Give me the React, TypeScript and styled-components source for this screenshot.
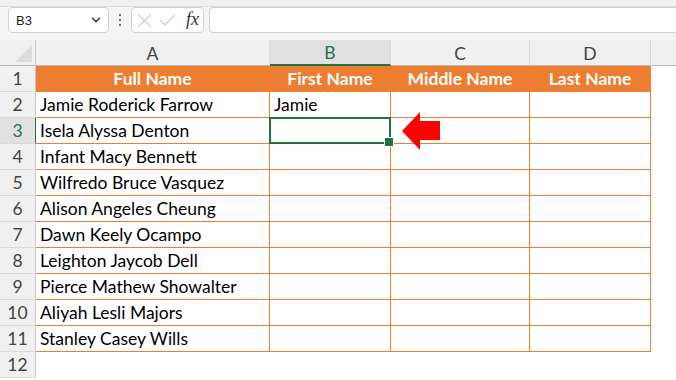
import React from 'react';
import styled, { createGlobalStyle } from 'styled-components';
import { ChevronDown, X, Check } from 'lucide-react';

const GlobalStyle = createGlobalStyle`
  html, body {
    margin: 0;
    padding: 0;
    background: #ffffff;
    width: 676px;
    height: 380px;
    overflow: hidden;
  }
  * { box-sizing: border-box; }
`;

const ORANGE = '#ED7D31';
const GREEN = '#217346';

const Sheet = styled.div`
  width: 676px;
  height: 380px;
  display: flex;
  flex-direction: column;
  font-family: Lato, 'Liberation Sans', sans-serif;
  background: #ffffff;
`;

const TopStrip = styled.div`
  height: 7px;
  background: #f0f0f0;
  border-bottom: 1px solid #dcdcdc;
`;

const FormulaBar = styled.div`
  height: 33px;
  background: #f5f5f5;
  display: flex;
  align-items: flex-start;
  padding: 0 0 0 8px;
`;

const NameBox = styled.div`
  width: 101px;
  height: 26px;
  background: #ffffff;
  border: 1px solid #d2d2d2;
  border-radius: 4px;
  display: flex;
  align-items: center;
  justify-content: space-between;
  padding: 0 5px 0 7px;
  font-family: 'Liberation Sans', Arial, sans-serif;
  font-size: 13px;
  color: #222;
`;

const Dots = styled.div`
  width: 22px;
  height: 26px;
  display: flex;
  flex-direction: column;
  align-items: center;
  justify-content: center;
  gap: 3px;
`;

const Dot = styled.span`
  width: 2px;
  height: 2px;
  background: #444;
  border-radius: 1px;
`;

const FxBox = styled.div`
  width: 73px;
  height: 26px;
  background: #ffffff;
  border: 1px solid #d2d2d2;
  border-radius: 4px;
  display: flex;
  align-items: center;
`;

const Fx = styled.span`
  font-family: 'Liberation Serif', 'DejaVu Serif', serif;
  font-style: italic;
  font-size: 18px;
  color: #333;
  margin-left: 8px;
  margin-top: -2px;
`;

const FormulaInput = styled.div`
  flex: 1;
  height: 26px;
  margin-left: 5px;
  background: #ffffff;
  border: 1px solid #d2d2d2;
  border-right: none;
  border-radius: 4px 0 0 4px;
`;

const Grid = styled.div`
  display: grid;
  grid-template-columns: 36px 234px 121px 139px 121px 1fr;
  grid-auto-rows: 26px;
  flex: 1;
`;

const Corner = styled.div`
  background: #f0f0f0;
  border-right: 1px solid #c8c8c8;
  border-bottom: 1px solid #b8b8b8;
  position: relative;
  &::after {
    content: '';
    position: absolute;
    right: 3px;
    bottom: 3px;
    width: 0;
    height: 0;
    border-style: solid;
    border-width: 0 0 17px 17px;
    border-color: transparent transparent #dcdcdc transparent;
  }
`;

const ColHead = styled.div<{ $active?: boolean; $fill?: boolean }>`
  background: ${(p) => (p.$active ? '#e1e1e1' : '#f0f0f0')};
  border-bottom: ${(p) => (p.$active ? `2px solid ${GREEN}` : '1px solid #b8b8b8')};
  border-right: ${(p) => (p.$fill ? 'none' : '1px solid #dadada')};
  display: flex;
  align-items: center;
  justify-content: center;
  padding-top: 1px;
  font-size: 17.5px;
  color: ${(p) => (p.$active ? GREEN : '#444')};
`;

const RowHead = styled.div<{ $active?: boolean }>`
  background: ${(p) => (p.$active ? '#e1e1e1' : '#f0f0f0')};
  border-right: 1px solid ${(p) => (p.$active ? GREEN : '#c8c8c8')};
  border-bottom: 1px solid #dadada;
  display: flex;
  align-items: center;
  justify-content: center;
  font-size: 17.5px;
  color: ${(p) => (p.$active ? GREEN : '#444')};
`;

const Cell = styled.div<{ $header?: boolean }>`
  position: relative;
  background: ${(p) => (p.$header ? ORANGE : '#ffffff')};
  border-bottom: 1px solid ${ORANGE};
  border-right: 1px solid ${ORANGE};
  display: flex;
  align-items: center;
  justify-content: ${(p) => (p.$header ? 'center' : 'flex-start')};
  padding: 0 4px;
  font-size: 17.5px;
  font-weight: ${(p) => (p.$header ? 700 : 400)};
  color: ${(p) => (p.$header ? '#ffffff' : '#000000')};
  white-space: nowrap;
`;

const Blank = styled.div`
  background: #ffffff;
`;

const Selection = styled.div`
  position: absolute;
  z-index: 2;
  left: -1px;
  top: -1px;
  right: -1px;
  bottom: -1px;
  border: 2px solid ${GREEN};
  pointer-events: none;
  &::after {
    content: '';
    position: absolute;
    right: -5px;
    bottom: -5px;
    width: 8px;
    height: 8px;
    background: ${GREEN};
    border: 1px solid #ffffff;
  }
`;

const Arrow = styled.svg`
  position: absolute;
  z-index: 2;
  left: 11px;
  top: -6px;
`;

const names = [
  'Jamie Roderick Farrow',
  'Isela Alyssa Denton',
  'Infant Macy Bennett',
  'Wilfredo Bruce Vasquez',
  'Alison Angeles Cheung',
  'Dawn Keely Ocampo',
  'Leighton Jaycob Dell',
  'Pierce Mathew Showalter',
  'Aliyah Lesli Majors',
  'Stanley Casey Wills',
];

const headers = ['Full Name', 'First Name', 'Middle Name', 'Last Name'];

export default function App() {
  return (
    <Sheet>
      <GlobalStyle />
      <TopStrip />
      <FormulaBar>
        <NameBox>
          <span>B3</span>
          <ChevronDown size={14} strokeWidth={2.5} color="#333" />
        </NameBox>
        <Dots>
          <Dot />
          <Dot />
          <Dot />
        </Dots>
        <FxBox>
          <X size={25} strokeWidth={1} color="#bdbdbd" />
          <Check size={21} strokeWidth={1.2} color="#bdbdbd" />
          <Fx>fx</Fx>
        </FxBox>
        <FormulaInput />
      </FormulaBar>
      <Grid>
        <Corner />
        {['A', 'B', 'C', 'D'].map((c) => (
          <ColHead key={c} $active={c === 'B'}>
            {c}
          </ColHead>
        ))}
        <ColHead $fill />

        <RowHead>1</RowHead>
        {headers.map((h) => (
          <Cell key={h} $header>
            {h}
          </Cell>
        ))}
        <Blank />

        {names.map((n, i) => {
          const row = i + 2;
          return (
            <React.Fragment key={n}>
              <RowHead $active={row === 3}>{row}</RowHead>
              <Cell>{n}</Cell>
              <Cell>
                {row === 2 ? 'Jamie' : ''}
                {row === 3 && <Selection />}
              </Cell>
              <Cell>
                {row === 3 && (
                  <Arrow width="40" height="40" viewBox="0 0 40 40">
                    <polygon points="0,19 18,0 18,9 38,9 38,28 18,28 18,38" fill="#ff0000" />
                  </Arrow>
                )}
              </Cell>
              <Cell />
              <Blank />
            </React.Fragment>
          );
        })}

        <RowHead>12</RowHead>
        <Blank />
        <Blank />
        <Blank />
        <Blank />
        <Blank />
      </Grid>
    </Sheet>
  );
}
